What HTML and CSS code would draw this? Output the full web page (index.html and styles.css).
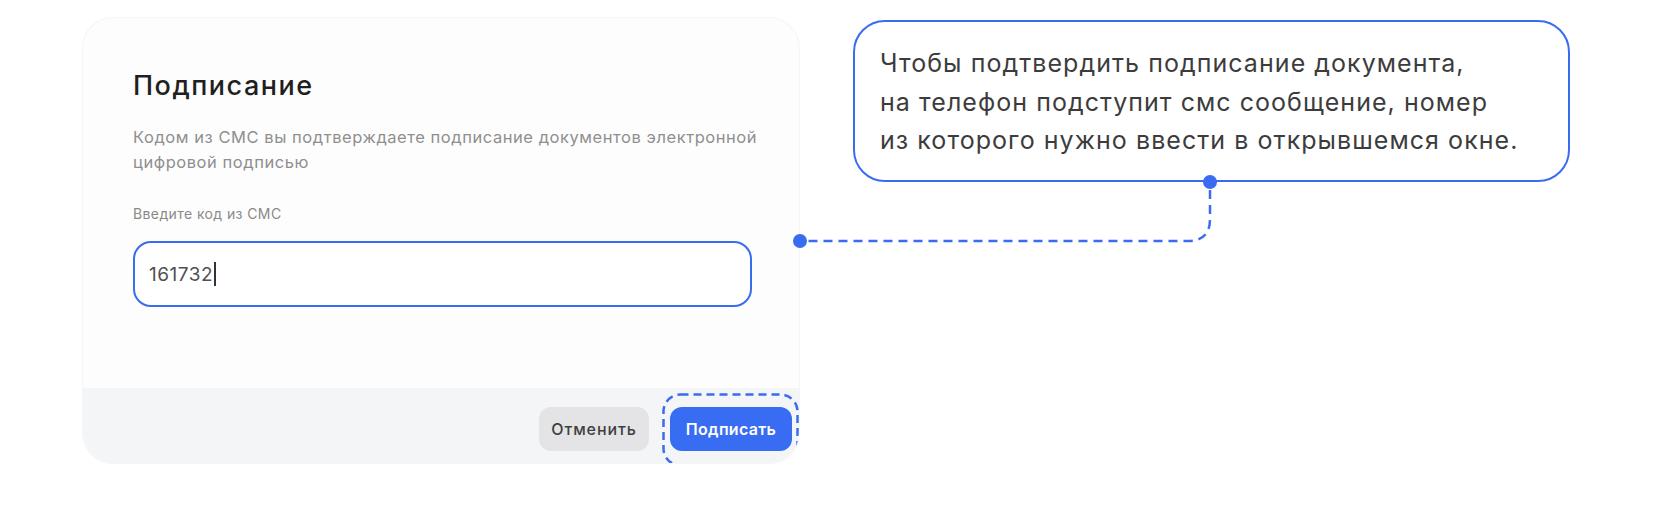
FILE: index.html
```html
<!DOCTYPE html>
<html lang="ru">
<head>
<meta charset="utf-8">
<title>Подписание</title>
<link rel="stylesheet" href="styles.css">
</head>
<body>
<div class="stage">
  <div class="card">
    <div class="card-body">
      <h2 class="title">Подписание</h2>
      <p class="desc">Кодом из СМС вы подтверждаете подписание документов электронной<br>цифровой подписью</p>
      <div class="label">Введите код из СМС</div>
      <div class="input"><span class="value">161732</span><span class="caret"></span></div>
    </div>
    <div class="card-footer">
      <button class="btn btn-cancel">Отменить</button>
      <div class="sign-wrap">
        <button class="btn btn-sign">Подписать</button>
        <svg class="focus-ring" width="137" height="74" viewBox="0 0 137 74">
          <rect x="1.5" y="1.5" width="134" height="71" rx="17" ry="17" fill="none" stroke="#3a6cf0" stroke-width="2.5" stroke-dasharray="8 5"/>
        </svg>
      </div>
    </div>
  </div>
  <div class="callout">
    Чтобы подтвердить подписание документа,<br>
    на телефон подступит смс сообщение, номер<br>
    из которого нужно ввести в открывшемся окне.
  </div>
  <svg class="connector" width="1653" height="518" viewBox="0 0 1653 518">
    <path d="M1210 190 V219 Q1210 241 1188 241 H808" fill="none" stroke="#3a6cf0" stroke-width="2.5" stroke-dasharray="9 6"/>
    <circle cx="1210" cy="182" r="7" fill="#3a6cf0"/>
    <circle cx="800" cy="241" r="7" fill="#3a6cf0"/>
  </svg>
</div>
</body>
</html>
```

FILE: styles.css
```css
* { box-sizing: border-box; }
html, body { margin: 0; padding: 0; background: #ffffff; }
body { font-family: Inter, "Noto Sans", sans-serif; }

.stage {
  position: relative;
  width: 1653px;
  height: 518px;
  display: flex;
  align-items: flex-start;
  padding-left: 83px;
  gap: 54px;
}

.card {
  margin-top: 18px;
  width: 716px;
  height: 445px;
  border-radius: 30px;
  background: #fdfdfd;
  box-shadow: 0 0 0 1px #f5f5f6;
  overflow: hidden;
  display: flex;
  flex-direction: column;
}

.card-body {
  height: 370px;
  padding: 52px 47px 0 50px;
}

.title {
  margin: 0;
  font-size: 27px;
  line-height: 32px;
  font-weight: 500;
  color: #1f1f1f;
  letter-spacing: 1.5px;
}

.desc {
  margin: 23px 0 0 0;
  font-size: 16.5px;
  line-height: 25px;
  color: #8f8f8f;
  letter-spacing: 0.55px;
  white-space: nowrap;
}

.label {
  margin-top: 30px;
  font-size: 14px;
  line-height: 18px;
  color: #8a8a8a;
  letter-spacing: 0.4px;
}

.input {
  margin-top: 18px;
  height: 66px;
  border: 2px solid #3a6cf0;
  border-radius: 18px;
  background: #fff;
  display: flex;
  align-items: center;
  padding-left: 14px;
}

.value {
  font-size: 19px;
  color: #505050;
  letter-spacing: 0.5px;
}

.caret {
  display: inline-block;
  width: 1.5px;
  height: 24px;
  background: #333;
  margin-left: 1px;
}

.card-footer {
  flex: 1;
  background: #f4f5f7;
  display: flex;
  justify-content: flex-end;
  align-items: flex-start;
  padding: 19px 7px 0 0;
  gap: 21px;
}

.btn {
  height: 44px;
  border: none;
  border-radius: 12px;
  font-family: Inter, "Noto Sans", sans-serif;
  font-size: 16px;
  padding: 0;
  cursor: pointer;
}

.btn-cancel {
  width: 110px;
  background: #e4e4e6;
  color: #3f3f3f;
  font-weight: 500;
  letter-spacing: 0.9px;
}

.sign-wrap {
  position: relative;
}

.btn-sign {
  width: 122px;
  background: #386cf2;
  color: #ffffff;
  font-weight: 600;
  letter-spacing: 0.3px;
}

.focus-ring {
  position: absolute;
  left: -8px;
  top: -14px;
  pointer-events: none;
}

.callout {
  margin-top: 20px;
  width: 717px;
  height: 162px;
  border: 2.5px solid #3a6cf0;
  border-radius: 32px;
  padding: 22px 0 0 25px;
  font-size: 25px;
  line-height: 38.5px;
  color: #3c3c3c;
  background: #fff;
  letter-spacing: 1.05px;
}

.connector {
  position: absolute;
  left: 0;
  top: 0;
  pointer-events: none;
}
```
